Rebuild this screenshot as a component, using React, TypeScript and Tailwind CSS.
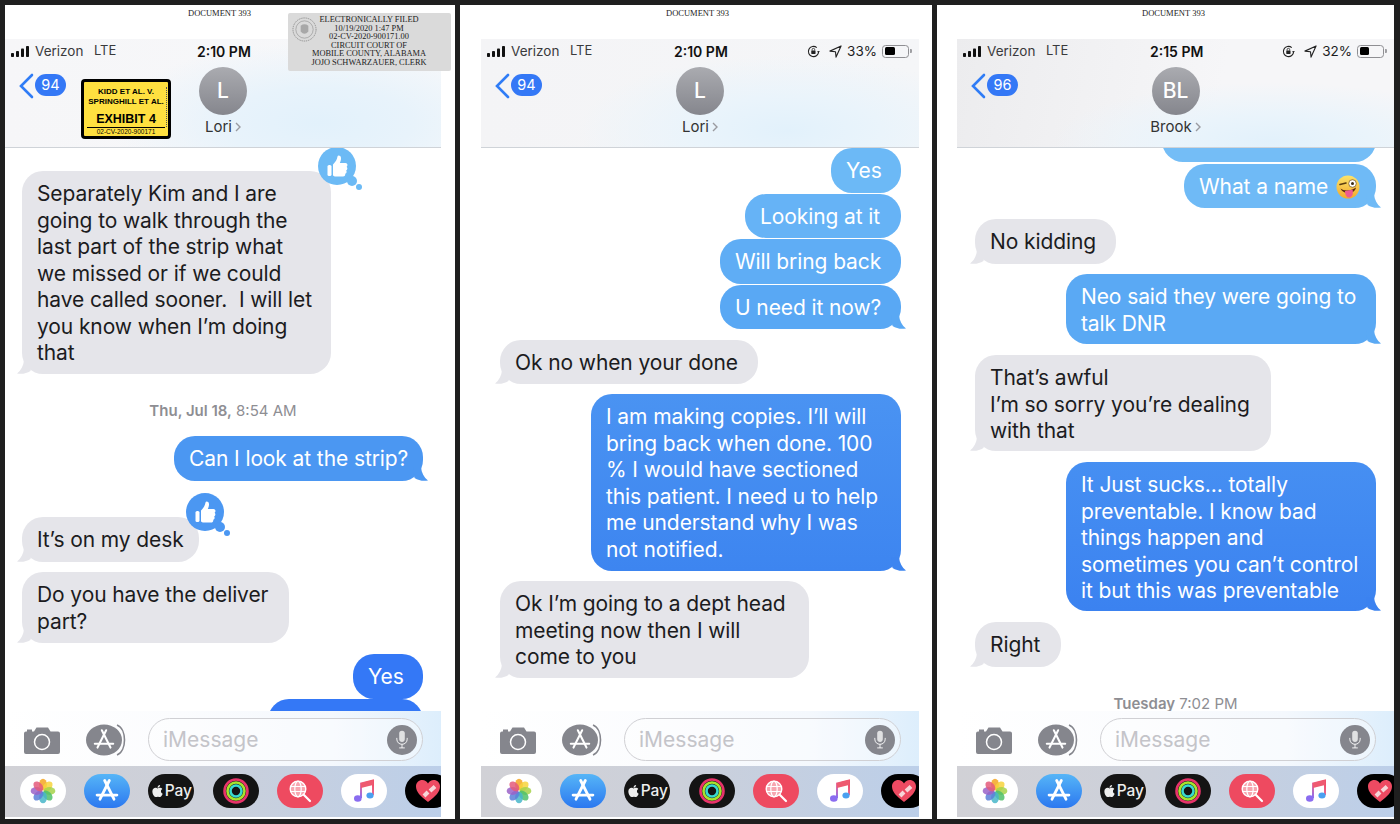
import React from "react";
import { FaApple } from "react-icons/fa";

const F = "font-['Inter','Liberation_Sans',sans-serif]";

function Tail({ side, color }: { side: "l" | "r"; color: string }) {
  if (side === "r")
    return (
      <svg className={`absolute right-[-5px] bottom-[0px] w-[15px] h-[14px] ${color}`} viewBox="0 0 15 14">
        <path d="M0 0 H8 C8.5 6 11 10.5 15 13.4 C10.5 14.4 5.5 13.6 1.5 11 Z" fill="currentColor" />
      </svg>
    );
  return (
    <svg className={`absolute left-[-5px] bottom-[0px] w-[15px] h-[14px] ${color}`} viewBox="0 0 15 14">
      <path d="M15 0 H7 C6.5 6 4 10.5 0 13.4 C4.5 14.4 9.5 13.6 13.5 11 Z" fill="currentColor" />
    </svg>
  );
}

function Like({ fill, cls }: { fill: string; cls: string }) {
  return (
    <div className={`absolute ${cls} w-[46px] h-[46px]`}>
      <svg viewBox="0 0 46 46" className={`w-[46px] h-[46px] ${fill}`}>
        <circle cx="19" cy="19" r="19" fill="currentColor" />
        <circle cx="34" cy="34" r="5" fill="currentColor" />
        <circle cx="41" cy="40" r="3" fill="currentColor" />
        <path
          d="M15 17.5 C17.5 15 19 12.5 19.5 9.5 C19.8 8 22.8 8.3 23 11 C23.1 13 22.4 14.6 21.8 16 H27.5 C29.8 16 30 19 28.6 19.8 C29.8 20.8 29.6 22.8 28.2 23.4 C29 24.6 28.6 26.3 27.2 26.8 C27.6 28.3 26.6 29.5 25 29.5 H18 C16.5 29.5 15.5 29 15 28.5 Z"
          fill="#fff"
        />
        <rect x="9.5" y="18" width="4" height="11" rx="1.6" fill="#fff" />
      </svg>
    </div>
  );
}

type Msg = {
  s: "l" | "r";
  t: string[];
  w: string;
  mt: string;
  bg?: string;
  c?: string;
  tail?: boolean;
  like?: { fill: string; cls: string };
  emoji?: boolean;
};

function Wink() {
  return (
    <svg viewBox="0 0 24 24" className="inline-block w-[24px] h-[24px] ml-[8px] align-[-5px]">
      <defs>
        <linearGradient id="wink" x1="0" y1="0" x2="0" y2="1">
          <stop offset="0" stopColor="#fbe36a" />
          <stop offset="1" stopColor="#f3a92c" />
        </linearGradient>
      </defs>
      <circle cx="12" cy="12" r="11.5" fill="url(#wink)" />
      <circle cx="16.5" cy="8.5" r="3.8" fill="#fff" stroke="#6b4a14" strokeWidth="0.7" />
      <circle cx="16.5" cy="8.5" r="1.5" fill="#3a2a10" />
      <path d="M4 9.5 L10 8" stroke="#5a3d10" strokeWidth="1.6" strokeLinecap="round" />
      <path d="M4.5 13.5 C8 16.5 15 16 20 12.5 C19 17 15 18.5 11 18 C8 17.5 5.5 16 4.5 13.5Z" fill="#5a2a12" />
      <path d="M9 16 C11 15.5 15 15 16.5 14.5 C17.5 18 16.5 22 13.5 22.5 C10.5 23 9 19.5 9 16Z" fill="#ee5a8f" />
    </svg>
  );
}

function Bubble({ m }: { m: Msg }) {
  const right = m.s === "r";
  const bg = right ? m.bg! : "bg-[#e5e5ea]";
  const tc = right ? m.c! : "text-[#e5e5ea]";
  return (
    <div
      className={`relative shrink-0 ${m.mt} ${m.w} ${right ? "self-end" : "self-start"} ${bg} ${
        right ? "text-white" : "text-[#1c1c1e]"
      } rounded-[21px] px-[15px] pt-[10px] pb-[8px] text-[21px] tracking-[-0.1px] leading-[26.5px] whitespace-pre`}
    >
      {m.t.map((l, i) => (
        <div key={i}>
          {l || "\u00a0"}
          {m.emoji && <Wink />}
        </div>
      ))}
      {m.tail && <Tail side={m.s} color={tc} />}
      {m.like && <Like {...m.like} />}
    </div>
  );
}

function DateLine({ a, b, mt }: { a: string; b: string; mt: string }) {
  return (
    <div className={`shrink-0 ${mt} h-[18px] text-center text-[15px] leading-[18px] text-[#8e8e93]`}>
      <span className="font-semibold">{a}</span> <span>{b}</span>
    </div>
  );
}

function AppGlyph({ cls, stroke, sw }: { cls: string; stroke: string; sw: string }) {
  return (
    <svg viewBox="0 0 24 24" className={cls} fill="none" stroke={stroke} strokeWidth={sw} strokeLinecap="round">
      <path d="M14 3 L6 19" />
      <path d="M10 3 L18 19" />
      <path d="M3.5 15.5 H20.5" />
    </svg>
  );
}

function Photos() {
  const cols = ["#f5a623", "#f7d33c", "#a6d24a", "#4fc06a", "#48b6c9", "#5a7fd8", "#9a62c8", "#e45a7b"];
  return (
    <svg viewBox="0 0 24 24" className="w-[26px] h-[26px]">
      {cols.map((c, i) => (
        <ellipse key={i} cx="12" cy="6" rx="3.6" ry="5.4" fill={c} opacity="0.85" transform={`rotate(${i * 45} 12 12)`} />
      ))}
    </svg>
  );
}

function Dock() {
  const pill = "shrink-0 w-[46px] h-[34px] rounded-[17px] flex items-center justify-center";
  return (
    <div className="h-[51px] shrink-0 overflow-hidden bg-[linear-gradient(90deg,#d1d1d6_0%,#ccd0da_45%,#bccfe9_100%)] flex items-center gap-[18.2px] pl-[15px] pb-[1px]">
      <div className={`${pill} bg-white`}>
        <Photos />
      </div>
      <div className={`${pill} bg-[linear-gradient(180deg,#56b5f7,#2b78f0)]`}>
        <AppGlyph cls="w-[28px] h-[28px]" stroke="#fff" sw="2.4" />
      </div>
      <div className={`${pill} bg-[#141414] text-[#eee] gap-[1px] text-[15.5px] font-medium`}>
        <FaApple className="w-[13px] h-[14px]" />
        <span>Pay</span>
      </div>
      <div className={`${pill} bg-[#141414]`}>
        <svg viewBox="0 0 28 28" className="w-[28px] h-[28px]" fill="none" strokeWidth="2.6">
          <circle cx="14" cy="14" r="11.5" stroke="#e8336a" />
          <circle cx="14" cy="14" r="8.5" stroke="#a6e32e" />
          <circle cx="14" cy="14" r="5.5" stroke="#38dbd0" />
        </svg>
      </div>
      <div className={`${pill} bg-[#ee4a60]`}>
        <svg viewBox="0 0 28 28" className="w-[28px] h-[28px]" fill="none" stroke="#fff" strokeWidth="1.2">
          <circle cx="12" cy="12" r="7.8" fill="#f7a6b0" stroke="#fff" strokeWidth="1.4" />
          <ellipse cx="12" cy="12" rx="3.2" ry="7.8" />
          <path d="M4.6 9.5 H19.4 M4.6 14.5 H19.4" />
          <path d="M18 18 L24 24" strokeWidth="2.2" strokeLinecap="round" />
        </svg>
      </div>
      <div className={`${pill} bg-white`}>
        <svg viewBox="0 0 28 28" className="w-[28px] h-[28px]" fill="none">
          <defs>
            <linearGradient id="note" x1="0" y1="1" x2="0.6" y2="0">
              <stop offset="0" stopColor="#8a6cf0" />
              <stop offset="0.55" stopColor="#e86c9a" />
              <stop offset="1" stopColor="#f0506a" />
            </linearGradient>
          </defs>
          <path d="M11 21 V6.5 L23 3.5 V18" stroke="url(#note)" strokeWidth="2" />
          <path d="M11 6 L23 3 V8 L11 11Z" fill="#ee5a70" />
          <ellipse cx="7.8" cy="21.5" rx="3.8" ry="3.2" fill="#8a6cf0" />
          <ellipse cx="20" cy="18.5" rx="3.6" ry="3" fill="#4aa0f0" />
        </svg>
      </div>
      <div className={`${pill} bg-black`}>
        <svg viewBox="0 0 28 28" className="w-[28px] h-[28px]">
          <path d="M14 25 C6 19 2 14.5 2 9.5 C2 5.5 5 3 8.3 3 C10.8 3 12.8 4.3 14 6.5 C15.2 4.3 17.2 3 19.7 3 C23 3 26 5.5 26 9.5 C26 14.5 22 19 14 25Z" fill="#ee4a62" />
          <path d="M10 19 L14 15 M16 14 L21 9.5" stroke="#f6d5d8" strokeWidth="4" />
        </svg>
      </div>
    </div>
  );
}

function InputBar() {
  return (
    <div className="h-[55px] shrink-0 flex items-center pt-[2px] pl-[18px] pr-[18px] bg-[linear-gradient(90deg,#ffffff_0%,#fbfcfe_40%,#f4f8fd_75%,#ddeefc_100%)]">
      <svg viewBox="0 0 38 30" className="w-[38px] h-[30px] shrink-0">
        <path
          d="M1 8.5 Q1 6.5 3 6.5 H4 V4.5 H9 V6.5 H11 L13.5 2.5 H25 L27.5 6.5 H35 Q37 6.5 37 8.5 V27 Q37 29 35 29 H3 Q1 29 1 27 Z"
          fill="#85868d"
        />
        <circle cx="19" cy="17" r="7.5" fill="none" stroke="#fff" strokeWidth="1.5" />
      </svg>
      <div className="relative ml-[25px] w-[41px] h-[32px] shrink-0">
        <svg viewBox="0 0 41 32" className="w-[41px] h-[32px]">
          <path d="M31 1 C41 5 41 27 31 31" fill="none" stroke="#85868d" strokeWidth="1.6" />
          <ellipse cx="18" cy="16" rx="18" ry="15.5" fill="#85868d" />
        </svg>
        <div className="absolute left-[5px] top-[3px]">
          <AppGlyph cls="w-[26px] h-[26px]" stroke="#fff" sw="1.9" />
        </div>
      </div>
      <div className="ml-[21px] flex-1 h-[43px] rounded-[22px] border-[1.5px] border-[#d0d0d4] flex items-center pl-[14px] pr-[5px] bg-white/40">
        <span className="text-[21px] text-[#c4c4c9] flex-1">iMessage</span>
        <div className="w-[30px] h-[30px] rounded-full bg-[#85868d] flex items-center justify-center">
          <svg viewBox="0 0 20 26" className="w-[16px] h-[21px]" fill="none" stroke="#fff">
            <rect x="6.5" y="2" width="7" height="14" rx="3.5" fill="#fff" fillOpacity="0.75" stroke="none" />
            <path d="M3.5 11 V12.5 C3.5 16.5 6.5 19 10 19 C13.5 19 16.5 16.5 16.5 12.5 V11 M10 19 V23.5 M6.5 23.5 H13.5" strokeWidth="1.1" />
          </svg>
        </div>
      </div>
    </div>
  );
}

function Signal() {
  return (
    <svg viewBox="0 0 20 11" className="w-[20px] h-[11px] shrink-0">
      <rect x="0" y="7" width="3" height="4" rx="0.8" fill="#111" />
      <rect x="5" y="5" width="3" height="6" rx="0.8" fill="#111" />
      <rect x="10" y="2.5" width="3" height="8.5" rx="0.8" fill="#111" />
      <rect x="15" y="0" width="3" height="11" rx="0.8" fill="#111" />
    </svg>
  );
}

function RightStatus({ pct, fill }: { pct: string; fill: string }) {
  return (
    <div className="ml-auto flex items-center">
      <svg viewBox="0 0 14 14" className="w-[13px] h-[13px]" fill="none" stroke="#222" strokeWidth="1.2">
        <path d="M12.5 7 A5.5 5.5 0 1 1 10.5 2.8" />
        <path d="M13.8 6.5 L12.4 8.5 L10.8 6.6" fill="#222" stroke="none" />
        <rect x="4.6" y="6" width="4.6" height="3.6" rx="0.5" fill="#222" stroke="none" />
        <path d="M5.5 6 V5 A1.4 1.4 0 0 1 8.3 5 V6" strokeWidth="0.9" />
      </svg>
      <svg viewBox="0 0 14 14" className="ml-[9px] w-[13px] h-[13px]" fill="none" stroke="#222" strokeWidth="1.2">
        <path d="M13 1 L1 6.6 L7 7.2 L7.6 13 Z" strokeLinejoin="round" />
      </svg>
      <span className="ml-[5px] text-[13.5px] text-[#1c1c1e]">{pct}</span>
      <div className="ml-[5px] w-[27px] h-[13px] rounded-[3.5px] border border-[#8f8f93] p-[1.5px]">
        <div className={`h-full ${fill} bg-black rounded-[1.5px]`} />
      </div>
      <div className="ml-[1px] w-[2px] h-[4px] bg-[#a0a0a4] rounded-r-[1px]" />
    </div>
  );
}

function Phone({
  cls,
  docCls,
  timeCls,
  time,
  right,
  badge,
  initials,
  name,
  msgs,
  head,
  children,
}: {
  cls: string;
  docCls: string;
  timeCls: string;
  time: string;
  right?: React.ReactNode;
  badge: string;
  initials: string;
  name: string;
  msgs: React.ReactNode;
  head: string;
  children?: React.ReactNode;
}) {
  return (
    <div className={`relative flex flex-col ${cls} h-[812px]`}>
      <div className={`h-[34px] shrink-0 pt-[3px] ${docCls} font-['Liberation_Serif',serif] text-[8.5px] leading-[10px] text-[#222]`}>
        DOCUMENT 393
      </div>
      <div className={`h-[109px] shrink-0 border-b border-[#cfd3d8] ${head} flex flex-col`}>
        <div className="h-[24px] flex items-center pl-[6px] pr-[7px] text-[#3a3a3c]">
          <Signal />
          <span className="ml-[4px] w-[48px] text-[13.5px]">Verizon</span>
          <span className="ml-[11px] text-[13px]">LTE</span>
          <span className={`absolute ${timeCls} text-[14px] font-semibold text-[#111]`}>{time}</span>
          {right}
        </div>
        <div className="grid grid-cols-[1fr_auto_1fr] px-[13px]">
          <div className="flex items-start pt-[10px]">
            <svg viewBox="0 0 16 26" className="w-[16px] h-[26px] shrink-0">
              <path d="M14 2 L3 13 L14 24" fill="none" stroke="#2f7cf6" strokeWidth="2.6" strokeLinecap="round" />
            </svg>
            <div className="ml-[1px] mt-[1px] h-[22px] w-[31px] rounded-[11px] bg-[#3478f6] text-white text-[14.5px] leading-[22px] text-center">{badge}</div>
          </div>
          <div className="flex flex-col items-center">
            <div className="mt-[4px] w-[48px] h-[48px] rounded-full bg-[linear-gradient(180deg,#aaabb0,#85868d)] text-white text-[21px] font-medium flex items-center justify-center">
              {initials}
            </div>
            <div className="mt-[2px] flex items-center text-[15px] leading-[20px] text-[#333]">
              {name}
              <svg viewBox="0 0 6 10" className="ml-[3px] w-[6px] h-[10px]">
                <path d="M1 1 L5 5 L1 9" fill="none" stroke="#9a9a9f" strokeWidth="1.4" />
              </svg>
            </div>
          </div>
          <div />
        </div>
      </div>
      <div className="h-[563px] shrink-0 overflow-hidden flex flex-col px-[18px]">{msgs}</div>
      <InputBar />
      <Dock />
      {children}
    </div>
  );
}

const m1: Msg[] = [
  {
    s: "l",
    w: "w-[309px] -ml-[1px] h-[203px]",
    mt: "mt-[23px]",
    tail: true,
    t: [
      "Separately Kim and I are",
      "going to walk through the",
      "last part of the strip what",
      "we missed or if we could",
      "have called sooner.  I will let",
      "you know when I’m doing",
      "that",
    ],
    like: { fill: "text-[#6cbaf5]", cls: "left-[296px] top-[-24px]" },
  },
];
const m1b: Msg[] = [
  { s: "r", w: "w-[249px] h-[45px]", mt: "mt-[16px]", bg: "bg-[#4b97f2]", c: "text-[#4b97f2]", tail: true, t: ["Can I look at the strip?"] },
  {
    s: "l",
    w: "w-[177px] -ml-[1px] h-[45px]",
    mt: "mt-[36px]",
    tail: true,
    t: ["It’s on my desk"],
    like: { fill: "text-[#4b97f2]", cls: "left-[164px] top-[-24px]" },
  },
  { s: "l", w: "w-[267px] -ml-[1px] h-[71px]", mt: "mt-[10px]", tail: true, t: ["Do you have the deliver", "part?"] },
  { s: "r", w: "w-[70px] h-[45px]", mt: "mt-[11px]", bg: "bg-[#3478f6]", c: "text-[#3478f6]", t: ["Yes"] },
  { s: "r", w: "w-[155px] h-[45px]", mt: "mt-[0px]", bg: "bg-[#3478f6]", c: "text-[#3478f6]", t: [""] },
];

const m2: Msg[] = [
  { s: "r", w: "w-[70px] h-[45px]", mt: "mt-[0px]", bg: "bg-[#6cb9f6]", c: "text-[#6cb9f6]", t: ["Yes"] },
  { s: "r", w: "w-[156px] h-[44px]", mt: "mt-[1px]", bg: "bg-[#66b3f6]", c: "text-[#66b3f6]", t: ["Looking at it"] },
  { s: "r", w: "w-[181px] h-[45px]", mt: "mt-[1px]", bg: "bg-[#5fadf5]", c: "text-[#5fadf5]", t: ["Will bring back"] },
  { s: "r", w: "w-[181px] h-[44px]", mt: "mt-[1px]", bg: "bg-[#59a8f4]", c: "text-[#59a8f4]", tail: true, t: ["U need it now?"] },
  { s: "l", w: "w-[258px] ml-[1px] h-[44px]", mt: "mt-[11px]", tail: true, t: ["Ok no when your done"] },
  {
    s: "r",
    w: "w-[310px] h-[177px]",
    mt: "mt-[10px]",
    bg: "bg-[linear-gradient(180deg,#4a93f2,#3d85f0)]",
    c: "text-[#3d85f0]",
    tail: true,
    t: [
      "I am making copies. I’ll will",
      "bring back when done. 100",
      "% I would have sectioned",
      "this patient. I need u to help",
      "me understand why I was",
      "not notified.",
    ],
  },
  { s: "l", w: "w-[309px] ml-[1px] h-[97px]", mt: "mt-[10px]", tail: true, t: ["Ok I’m going to a dept head", "meeting now then I will", "come to you"] },
];

const m3: Msg[] = [
  { s: "r", w: "w-[214px] h-[45px]", mt: "-mt-[31px]", bg: "bg-[#74bdf6]", c: "text-[#74bdf6]", t: [""] },
  { s: "r", w: "w-[192px] h-[44px]", mt: "mt-[2px]", bg: "bg-[#6fbaf6]", c: "text-[#6fbaf6]", tail: true, t: ["What a name"], emoji: true },
  { s: "l", w: "w-[141px] h-[45px]", mt: "mt-[11px]", tail: true, t: ["No kidding"] },
  { s: "r", w: "w-[310px] h-[70px]", mt: "mt-[10px]", bg: "bg-[#5aa9f4]", c: "text-[#5aa9f4]", tail: true, t: ["Neo said they were going to", "talk DNR"] },
  { s: "l", w: "w-[296px] h-[96px]", mt: "mt-[11px]", tail: true, t: ["That’s awful", "I’m so sorry you’re dealing", "with that"] },
  {
    s: "r",
    w: "w-[310px] h-[149px]",
    mt: "mt-[11px]",
    bg: "bg-[linear-gradient(180deg,#468ff2,#3b82f0)]",
    c: "text-[#3b82f0]",
    tail: true,
    t: ["It Just sucks... totally", "preventable. I know bad", "things happen and", "sometimes you can’t control", "it but this was preventable"],
  },
  { s: "l", w: "w-[86px] h-[45px]", mt: "mt-[11px]", tail: true, t: ["Right"] },
];

export default function App() {
  return (
    <div className={`w-[1400px] h-[824px] overflow-hidden bg-[#1f1f1f] flex gap-[5px] p-[5px] ${F}`}>
      <div className="w-[450px] h-[814px] shrink-0 bg-white">
        <Phone
          cls="w-[436px]"
          docCls="ml-[183px]"
          timeCls="left-[192px]"
          time="2:10 PM"
          badge="94"
          initials="L"
          name="Lori"
          head="bg-[radial-gradient(ellipse_48%_75%_at_72%_78%,#e2f1fb_0%,#e8f3fb_45%,transparent_100%),linear-gradient(90deg,#f6f6f8,#f7f8fa)]"
          msgs={
            <>
              {m1.map((m, i) => (
                <Bubble key={i} m={m} />
              ))}
              <DateLine mt="mt-[28px]" a="Thu, Jul 18," b="8:54 AM" />
              {m1b.map((m, i) => (
                <Bubble key={i} m={m} />
              ))}
            </>
          }
        >
          <div className="absolute left-[76px] top-[74px] w-[90px] h-[60px] rounded-[4px] bg-[#ffe040] border-[3px] border-black flex flex-col items-center font-['Liberation_Sans',sans-serif] text-black">
            <div className="mt-[5px] text-[8px] leading-[9.5px] font-bold text-center whitespace-nowrap">
              KIDD ET AL. V.
              <br />
              SPRINGHILL ET AL.
            </div>
            <div className="mt-[7px] text-[12.5px] leading-[13px] font-bold">EXHIBIT 4</div>
            <div className="mt-[1px] w-[78px] border-t border-black text-[6.5px] leading-[8px] text-center">02-CV-2020-900171</div>
            <div className="absolute right-[1px] top-[5px] h-[40px] border-r border-dotted border-[#555]" />
          </div>
          <div className="absolute left-[283px] top-[8px] w-[163px] h-[58px] rounded-[2px] bg-[#dadada] flex items-start font-['Liberation_Serif',serif] text-[#222]">
            <svg viewBox="0 0 26 26" className="mt-[4px] ml-[4px] w-[25px] h-[25px] shrink-0" fill="none" stroke="#8a8a8a">
              <circle cx="13" cy="13" r="12" strokeWidth="1" strokeDasharray="1.2 0.8" />
              <circle cx="13" cy="13" r="9" strokeWidth="0.6" />
              <path d="M9 9 Q13 6 17 9 V15 Q13 20 9 15 Z" fill="#a8a8a8" stroke="none" />
            </svg>
            <div className="w-[116px] -ml-[6px] pt-[3px] text-center text-[8.4px] leading-[8.5px] whitespace-nowrap">
              ELECTRONICALLY FILED
              <br />
              10/19/2020 1:47 PM
              <br />
              02-CV-2020-900171.00
              <br />
              CIRCUIT COURT OF
              <br />
              MOBILE COUNTY, ALABAMA
              <br />
              JOJO SCHWARZAUER, CLERK
            </div>
          </div>
        </Phone>
      </div>

      <div className="w-[472px] h-[814px] shrink-0 bg-white pl-[21px]">
        <Phone
          cls="w-[438px]"
          docCls="ml-[185px]"
          timeCls="left-[193px]"
          time="2:10 PM"
          badge="94"
          initials="L"
          name="Lori"
          right={<RightStatus pct="33%" fill="w-[10px]" />}
          head="bg-[radial-gradient(ellipse_48%_70%_at_70%_85%,#e2f1fb_0%,#eaf4fb_45%,transparent_100%),linear-gradient(90deg,#f4f4f6,#f5f6f8)]"
          msgs={
            <>
              {m2.map((m, i) => (
                <Bubble key={i} m={m} />
              ))}
              <DateLine mt="mt-[30px]" a="Thursday" b="2:32 PM" />
            </>
          }
        />
      </div>

      <div className="w-[457px] h-[814px] shrink-0 bg-white pl-[20px]">
        <Phone
          cls="w-[437px]"
          docCls="ml-[185px]"
          timeCls="left-[193px]"
          time="2:15 PM"
          badge="96"
          initials="BL"
          name="Brook"
          right={<RightStatus pct="32%" fill="w-[9px]" />}
          head="bg-[radial-gradient(ellipse_50%_55%_at_72%_95%,#e2f1fb_0%,#eaf4fb_45%,transparent_100%),linear-gradient(100deg,#ececee,#f6f6f8_60%)]"
          msgs={
            <>
              {m3.map((m, i) => (
                <Bubble key={i} m={m} />
              ))}
              <DateLine mt="mt-[28px]" a="Tuesday" b="7:02 PM" />
            </>
          }
        />
      </div>
    </div>
  );
}
